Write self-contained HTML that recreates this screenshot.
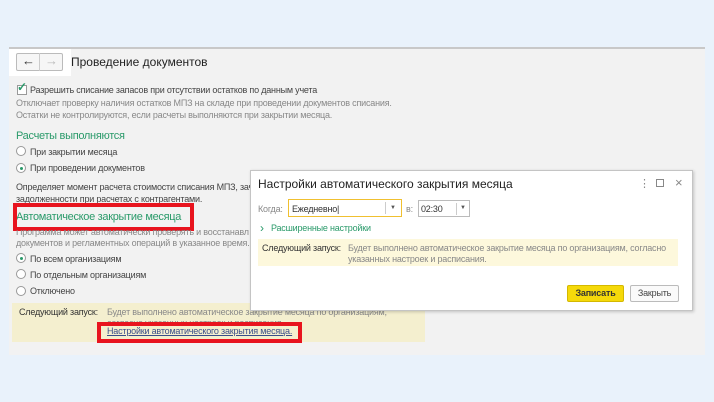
<!DOCTYPE html>
<html><head><meta charset="utf-8"><style>
*{margin:0;padding:0;box-sizing:border-box}
body{width:714px;height:402px;background:#e9f2fb;font-family:"Liberation Sans",sans-serif;position:relative;overflow:hidden;font-size:9px;letter-spacing:-0.2px;color:#444}
.a{position:absolute;white-space:nowrap}
.panel{position:absolute;left:9px;top:47px;width:696px;height:308px;background:#f2f2f2;border-top:2px solid #c8c8c8}
.g{color:#888}
.green{color:#2a9a6a}
.rad{position:absolute;width:10px;height:10px;border:1px solid #999;border-radius:50%;background:#fff}
.rad.on::after{content:"";position:absolute;left:2.5px;top:2.5px;width:3px;height:3px;border-radius:50%;background:#2a9a6a}
.red{position:absolute;border:4px solid #e8141e}
</style></head><body>
<div class="panel"></div>
<div class="a" style="left:9px;top:49px;width:62px;height:27px;background:#fff"></div>
<div class="a" style="left:16px;top:53px;width:47px;height:18px;border:1px solid #bbb;background:#f6f6f6;border-radius:2px"></div>
<div class="a" style="left:39px;top:53px;width:1px;height:18px;background:#ccc"></div>
<div class="a" style="left:22px;top:53px;font-size:13px;color:#333">&#8592;</div>
<div class="a" style="left:45px;top:53px;font-size:13px;color:#bbb">&#8594;</div>
<div class="a" style="left:71px;top:55px;font-size:12px;letter-spacing:0;color:#222">Проведение документов</div>

<div class="a" style="left:17px;top:85px;width:10px;height:10px;border:1px solid #999;background:#fff"></div>
<div class="a" style="left:17px;top:80px;font-size:12px;color:#2a9a6a;font-weight:bold">&#10003;</div>
<div class="a" style="left:30px;top:85px">Разрешить списание запасов при отсутствии остатков по данным учета</div>
<div class="a g" style="left:16px;top:98px">Отключает проверку наличия остатков МПЗ на складе при проведении документов списания.</div>
<div class="a g" style="left:16px;top:110px">Остатки не контролируются, если расчеты выполняются при закрытии месяца.</div>
<div class="a green" style="left:16px;top:130px;font-size:11px;letter-spacing:-0.3px">Расчеты выполняются</div>
<div class="rad" style="left:16px;top:146px"></div>
<div class="a" style="left:30px;top:147px">При закрытии месяца</div>
<div class="rad on" style="left:16px;top:163px"></div>
<div class="a" style="left:30px;top:163px">При проведении документов</div>
<div class="a" style="left:16px;top:182px">Определяет момент расчета стоимости списания МПЗ, зач</div>
<div class="a" style="left:16px;top:194px">задолженности при расчетах с контрагентами.</div>
<div class="a green" style="left:16px;top:211px;font-size:11px;letter-spacing:-0.3px">Автоматическое закрытие месяца</div>
<div class="red" style="left:13px;top:203px;width:181px;height:28px"></div>
<div class="a g" style="left:16px;top:227px;clip-path:inset(3px 0 0 0)">Программа может автоматически проверять и восстанавл</div>
<div class="a g" style="left:16px;top:238px">документов и регламентных операций в указанное время.</div>
<div class="rad on" style="left:16px;top:253px"></div>
<div class="a" style="left:30px;top:254px">По всем организациям</div>
<div class="rad" style="left:16px;top:269px"></div>
<div class="a" style="left:30px;top:270px">По отдельным организациям</div>
<div class="rad" style="left:16px;top:286px"></div>
<div class="a" style="left:30px;top:286px">Отключено</div>

<div class="a" style="left:12px;top:303px;width:413px;height:39px;background:#f4efcf"></div>
<div class="a" style="left:19px;top:307px;color:#333">Следующий запуск:</div>
<div class="a g" style="left:107px;top:307px">Будет выполнено автоматическое закрытие месяца по организациям,</div>
<div class="a g" style="left:107px;top:318px;clip-path:inset(0 0 4px 0)">согласно указанных настроек и расписания.</div>
<div class="a" style="left:100px;top:324px;width:199px;height:15px;background:#f4efcf"></div>
<div class="a" style="left:107px;top:326px;color:#3a4f8a;text-decoration:underline">Настройки автоматического закрытия месяца.</div>
<div class="red" style="left:97px;top:322px;width:205px;height:21px"></div>

<div class="a" style="left:250px;top:170px;width:443px;height:141px;background:#fff;border:1px solid #c4c4c4;box-shadow:1px 1px 3px rgba(0,0,0,.2)"></div>
<div class="a" style="left:258px;top:177px;font-size:12px;letter-spacing:0;color:#222">Настройки автоматического закрытия месяца</div>
<div class="a" style="left:639px;top:177px;font-size:11px;color:#888">&#8942;</div>
<div class="a" style="left:656px;top:179px;width:8px;height:8px;border:1px solid #888"></div>
<div class="a" style="left:675px;top:175px;font-size:13px;color:#888">&#215;</div>
<div class="a g" style="left:258px;top:204px">Когда:</div>
<div class="a" style="left:288px;top:199px;width:114px;height:18px;border:1px solid #f0c030;background:#fff"></div>
<div class="a" style="left:385px;top:202px;width:1px;height:12px;background:#ccc"></div>
<div class="a" style="left:390px;top:205px;font-size:6px;color:#555">&#9660;</div>
<div class="a" style="left:292px;top:204px;color:#333">Ежедневно|</div>
<div class="a g" style="left:406px;top:204px">в:</div>
<div class="a" style="left:418px;top:200px;width:52px;height:17px;border:1px solid #bbb;background:#fff"></div>
<div class="a" style="left:456px;top:203px;width:1px;height:12px;background:#ccc"></div>
<div class="a" style="left:460px;top:205px;font-size:6px;color:#555">&#9660;</div>
<div class="a" style="left:421px;top:204px;color:#333">02:30</div>
<div class="a green" style="left:260px;top:221px;font-size:12px">&#8250;</div>
<div class="a green" style="left:271px;top:223px">Расширенные настройки</div>
<div class="a" style="left:258px;top:239px;width:420px;height:27px;background:#fdf8dc"></div>
<div class="a" style="left:262px;top:243px;color:#333">Следующий запуск:</div>
<div class="a g" style="left:348px;top:243px">Будет выполнено автоматическое закрытие месяца по организациям, согласно</div>
<div class="a g" style="left:348px;top:254px">указанных настроек и расписания.</div>
<div class="a" style="left:567px;top:285px;width:57px;height:17px;background:#f5d90a;border:1px solid #d4b800;border-radius:2px;font-weight:bold;color:#333;text-align:center;line-height:15px">Записать</div>
<div class="a" style="left:630px;top:285px;width:49px;height:17px;background:#fafafa;border:1px solid #bbb;border-radius:2px;color:#444;text-align:center;line-height:15px">Закрыть</div>
</body></html>
